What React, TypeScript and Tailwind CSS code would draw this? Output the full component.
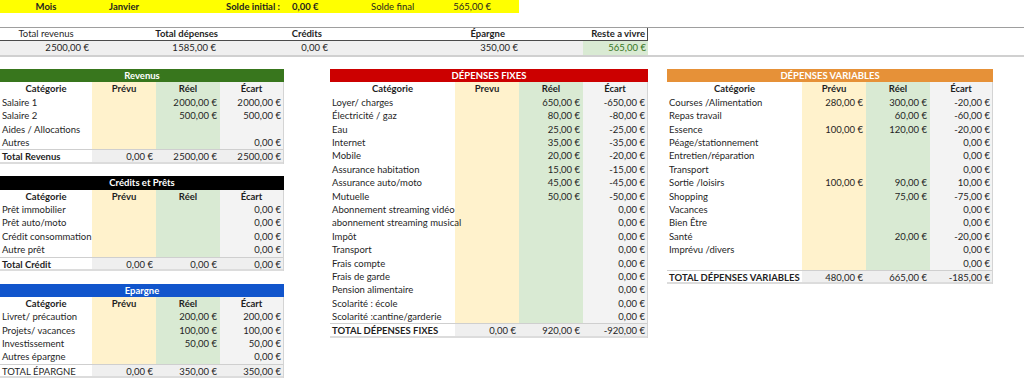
import React from "react";

type Row = [string, string, string, string];

const K = (s: string) => s.replace("#", "\u200a");

const REVENUS: Row[] = [
  ["Salaire 1", "", K("2#000,00 €"), K("2#000,00 €")],
  ["Salaire 2", "", "500,00 €", "500,00 €"],
  ["Aides / Allocations", "", "", ""],
  ["Autres", "", "", "0,00 €"],
];

const CREDITS: Row[] = [
  ["Prêt immobilier", "", "", "0,00 €"],
  ["Prêt auto/moto", "", "", "0,00 €"],
  ["Crédit consommation", "", "", "0,00 €"],
  ["Autre prêt", "", "", "0,00 €"],
];

const EPARGNE: Row[] = [
  ["Livret/ précaution", "", "200,00 €", "200,00 €"],
  ["Projets/ vacances", "", "100,00 €", "100,00 €"],
  ["Investissement", "", "50,00 €", "50,00 €"],
  ["Autres épargne", "", "", "0,00 €"],
];

const FIXES: Row[] = [
  ["Loyer/ charges", "", "650,00 €", "-650,00 €"],
  ["Électricité / gaz", "", "80,00 €", "-80,00 €"],
  ["Eau", "", "25,00 €", "-25,00 €"],
  ["Internet", "", "35,00 €", "-35,00 €"],
  ["Mobile", "", "20,00 €", "-20,00 €"],
  ["Assurance habitation", "", "15,00 €", "-15,00 €"],
  ["Assurance auto/moto", "", "45,00 €", "-45,00 €"],
  ["Mutuelle", "", "50,00 €", "-50,00 €"],
  ["Abonnement streaming vidéo", "", "", "0,00 €"],
  ["abonnement streaming musical", "", "", "0,00 €"],
  ["Impôt", "", "", "0,00 €"],
  ["Transport", "", "", "0,00 €"],
  ["Frais compte", "", "", "0,00 €"],
  ["Frais de garde", "", "", "0,00 €"],
  ["Pension alimentaire", "", "", "0,00 €"],
  ["Scolarité : école", "", "", "0,00 €"],
  ["Scolarité :cantine/garderie", "", "", "0,00 €"],
];

const VARIABLES: Row[] = [
  ["Courses /Alimentation", "280,00 €", "300,00 €", "-20,00 €"],
  ["Repas travail", "", "60,00 €", "-60,00 €"],
  ["Essence", "100,00 €", "120,00 €", "-20,00 €"],
  ["Péage/stationnement", "", "", "0,00 €"],
  ["Entretien/réparation", "", "", "0,00 €"],
  ["Transport", "", "", "0,00 €"],
  ["Sortie /loisirs", "100,00 €", "90,00 €", "10,00 €"],
  ["Shopping", "", "75,00 €", "-75,00 €"],
  ["Vacances", "", "", "0,00 €"],
  ["Bien Être", "", "", "0,00 €"],
  ["Santé", "", "20,00 €", "-20,00 €"],
  ["Imprévu /divers", "", "", "0,00 €"],
  ["", "", "", "0,00 €"],
];

function BudgetTable({
  title,
  bar,
  catW,
  prevu,
  rows,
  total,
  totalBold = true,
  className = "",
}: {
  title: string;
  bar: string;
  catW: string;
  prevu: string;
  rows: Row[];
  total: Row;
  totalBold?: boolean;
  className?: string;
}) {
  return (
    <div className={className}>
      <div className={`h-[13.4px] text-center text-[9.5px] font-bold leading-[13.4px] text-white ${bar}`}>{title}</div>
      <div className="border-r border-[#d4d4d4]">
        <div className="flex h-[13.4px] font-bold leading-[13.4px]">
          <div className={`${catW} text-center`}>Catégorie</div>
          <div className="w-[64px] bg-[#fff2cc] text-center">{prevu}</div>
          <div className="w-[64px] bg-[#d9ead3] text-center">Réel</div>
          <div className="flex-1 bg-[#f3f3f3] text-center">Écart</div>
        </div>
        {rows.map((r, i) => (
          <div key={i} className="flex h-[13.4px] leading-[13.4px]">
            <div className={`${catW} relative z-10 whitespace-nowrap pl-[2px]`}>{r[0]}</div>
            <div className="w-[64px] bg-[#fff2cc] pr-[3px] text-right">{r[1]}</div>
            <div className="w-[64px] bg-[#d9ead3] pr-[3px] text-right">{r[2]}</div>
            <div className="flex-1 bg-[#f3f3f3] pr-[2px] text-right">{r[3]}</div>
          </div>
        ))}
        <div
          className={`flex h-[14.4px] border-t border-b-2 border-t-[#cfcfcf] border-b-[#dcdcdc] leading-[13.4px] ${
            totalBold ? "font-bold" : ""
          }`}
        >
          <div className={`${catW} whitespace-nowrap pl-[2px]`}>{total[0]}</div>
          <div className="w-[64px] bg-[#efefef] pr-[3px] text-right font-normal">{total[1]}</div>
          <div className="w-[64px] bg-[#efefef] pr-[3px] text-right font-normal">{total[2]}</div>
          <div className="flex-1 bg-[#efefef] pr-[2px] text-right font-normal">{total[3]}</div>
        </div>
      </div>
    </div>
  );
}

export default function App() {
  return (
    <div
      className="h-[384px] w-[1024px] overflow-hidden bg-white text-[9.5px] text-[#1f1f1f]"
      style={{ fontFamily: "Lato, 'Open Sans', sans-serif" }}
    >
      {/* bandeau mois */}
      <div className="flex h-[13.4px] w-[519px] bg-[#ffff00] leading-[13.4px]">
        <div className="w-[92px] text-center font-bold">Mois</div>
        <div className="w-[64px] text-center font-bold">Janvier</div>
        <div className="w-[127px] pr-[3px] text-right font-bold">Solde initial :</div>
        <div className="w-[80px] pl-[9px] font-bold">0,00 €</div>
        <div className="w-[72px] pl-[8px]">Solde final</div>
        <div className="w-[70px] pr-[14px] text-right">565,00 €</div>
      </div>

      {/* résumé */}
      <div className="mt-[13.4px] border-t border-[#9e9e9e]">
        <div className="flex h-[13.4px] w-[648px] border-r border-b border-[#4a4a4a] leading-[12.4px]">
          <div className="w-[92px] text-center">Total revenus</div>
          <div className="w-[128px] pr-[2px] text-right font-bold">Total dépenses</div>
          <div className="w-[110px] pr-[8px] text-right font-bold">Crédits</div>
          <div className="w-[190px] pr-[15px] text-right font-bold">Épargne</div>
          <div className="w-[63px]" />
          <div className="flex-1 pr-[2px] text-right font-bold">Reste a vivre</div>
        </div>
        <div className="flex h-[13.4px] w-[648px] leading-[13.4px]">
          <div className="w-[92px] bg-[#efefef] pr-[3px] text-right">{K("2#500,00 €")}</div>
          <div className="w-[128px] bg-[#efefef] pr-[4px] text-right">{K("1#585,00 €")}</div>
          <div className="w-[110px] bg-[#efefef] pr-[2px] text-right">0,00 €</div>
          <div className="w-[190px] bg-[#efefef] pr-[2px] text-right">350,00 €</div>
          <div className="w-[63px] bg-[#efefef]" />
          <div className="flex-1 bg-[#d9ead3] pr-[2px] text-right text-[#38761d]">565,00 €</div>
        </div>
        <div className="h-[2px] bg-[#d0d0d0]" />
      </div>

      {/* tableaux */}
      <div className="mt-[12.5px] flex items-start">
        <div className="flex w-[284px] flex-col">
          <BudgetTable
            title="Revenus"
            bar="bg-[#38761d]"
            catW="w-[92px]"
            prevu="Prévu"
            rows={REVENUS}
            total={["Total Revenus", "0,00 €", K("2#500,00 €"), K("2#500,00 €")]}
          />
          <BudgetTable
            className="mt-[12.5px]"
            title="Crédits et Prêts"
            bar="bg-black"
            catW="w-[92px]"
            prevu="Prévu"
            rows={CREDITS}
            total={["Total Crédit", "0,00 €", "0,00 €", "0,00 €"]}
          />
          <BudgetTable
            className="mt-[12.5px]"
            title="Epargne"
            bar="bg-[#1155cc]"
            catW="w-[92px]"
            prevu="Prévu"
            rows={EPARGNE}
            total={["TOTAL ÉPARGNE", "0,00 €", "350,00 €", "350,00 €"]}
            totalBold={false}
          />
        </div>

        <BudgetTable
          className="ml-[46px] w-[318px]"
          title="DÉPENSES FIXES"
          bar="bg-[#cc0000]"
          catW="w-[125px]"
          prevu="Prevu"
          rows={FIXES}
          total={["TOTAL DÉPENSES FIXES", "0,00 €", "920,00 €", "-920,00 €"]}
        />

        <BudgetTable
          className="ml-[19px] w-[326px]"
          title="DÉPENSES VARIABLES"
          bar="bg-[#e69138]"
          catW="w-[135px]"
          prevu="Prévu"
          rows={VARIABLES}
          total={["TOTAL DÉPENSES VARIABLES", "480,00 €", "665,00 €", "-185,00 €"]}
        />
      </div>
    </div>
  );
}
